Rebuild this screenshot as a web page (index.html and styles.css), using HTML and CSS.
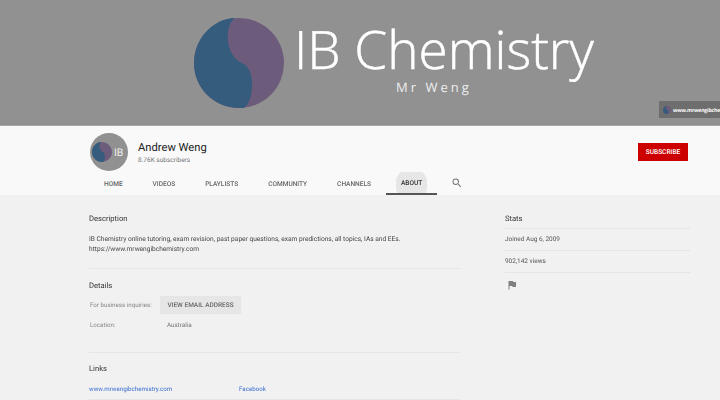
FILE: index.html
```html
<!DOCTYPE html>
<html lang="en">
<head>
<meta charset="utf-8">
<title>Andrew Weng - About</title>
<link rel="stylesheet" href="styles.css">
</head>
<body>
<svg class="defs" width="0" height="0" aria-hidden="true">
  <symbol id="yin" viewBox="0 0 90 90">
    <circle cx="45" cy="45" r="45" fill="#6c5b7b"/>
    <path d="M41 0C35 4 33 14 34 24C36 36 42 43 50 46C56 50 58 58 58 65C58 76 56 85 50 90C48 90 46 90 45 90C20 90 0 70 0 45C0 20 20 0 41 0Z" fill="#355c7d"/>
  </symbol>
</svg>
<div class="page">
<header class="banner">
  <svg class="banner-logo"><use href="#yin"/></svg>
  <div class="banner-text">
    <div class="banner-title">IB Chemistry</div>
    <div class="banner-sub">Mr Weng</div>
  </div>
  <div class="banner-chip">
    <svg class="chip-logo"><use href="#yin"/></svg>
    <span class="chip-text">www.mrwengibche</span>
  </div>
</header>
<section class="channel">
  <div class="channel-row">
    <div class="avatar">
      <svg class="avatar-logo"><use href="#yin"/></svg>
      <span class="avatar-text">IB</span>
    </div>
    <div class="channel-meta">
      <div class="channel-name">Andrew Weng</div>
      <div class="channel-subs">8.76K subscribers</div>
    </div>
    <div class="subscribe">SUBSCRIBE</div>
  </div>
  <nav class="tabs">
    <span class="tab">HOME</span>
    <span class="tab">VIDEOS</span>
    <span class="tab">PLAYLISTS</span>
    <span class="tab">COMMUNITY</span>
    <span class="tab">CHANNELS</span>
    <span class="tab tab-active"><span class="tab-label">ABOUT</span></span>
    <svg class="search" viewBox="0 0 24 24"><path d="M15.5 14h-.79l-.28-.27A6.47 6.47 0 0 0 16 9.5 6.5 6.5 0 1 0 9.5 16c1.61 0 3.09-.59 4.23-1.57l.27.28v.79l5 4.99L20.49 19l-4.99-5zm-6 0C7.01 14 5 11.99 5 9.5S7.01 5 9.5 5 14 7.01 14 9.5 11.99 14 9.5 14z"/></svg>
  </nav>
</section>
<main class="about">
  <div class="left">
    <h2 class="heading heading-desc">Description</h2>
    <p class="desc">IB Chemistry online tutoring, exam revision, past paper questions, exam predictions, all topics, IAs and EEs.<br>https://www.mrwengibchemistry.com</p>
    <hr class="rule rule-a">
    <h2 class="heading heading-details">Details</h2>
    <div class="detail-row">
      <span class="detail-label">For business inquiries:</span>
      <span class="email-btn">VIEW EMAIL ADDRESS</span>
    </div>
    <div class="detail-row detail-loc">
      <span class="detail-label">Location:</span>
      <span class="detail-value">Australia</span>
    </div>
    <hr class="rule rule-b">
    <h2 class="heading heading-links">Links</h2>
    <div class="links">
      <a class="link link-site">www.mrwengibchemistry.com</a>
      <a class="link">Facebook</a>
    </div>
    <hr class="rule rule-c">
  </div>
  <aside class="right">
    <h2 class="heading heading-stats">Stats</h2>
    <div class="stat">Joined Aug 6, 2009</div>
    <div class="stat">902,142 views</div>
    <div class="stat stat-flag">
      <svg class="flag" viewBox="0 0 24 24"><path d="M14.4 6 14 4H5v17h2v-7h5.6l.4 2h7V6z"/></svg>
    </div>
  </aside>
</main>
</div>
</body>
</html>
```
FILE: styles.css
```css
* { box-sizing: border-box; }
html, body { margin: 0; padding: 0; }
body {
  width: 720px;
  height: 400px;
  overflow: hidden;
  background: #f1f1f1;
  font-family: Roboto, "Liberation Sans", sans-serif;
  color: #333;
  text-rendering: geometricPrecision;
}
.defs { position: absolute; }
.page { filter: blur(0.3px); }

.banner {
  position: relative;
  height: 126px;
  background: #919191;
  border-bottom: 1px solid #a8a8a8;
  display: flex;
  padding: 18px 0 0 194px;
  overflow: hidden;
}
.banner-logo { width: 90px; height: 90px; flex: none; }
.banner-text {
  margin-left: 10px;
  display: flex;
  flex-direction: column;
  color: #fff;
}
.banner-title {
  font-family: "Open Sans", sans-serif;
  font-weight: 300;
  font-size: 53px;
  line-height: 60px;
  margin-top: 1px;
  white-space: nowrap;
  -webkit-text-stroke: 0.5px #fff;
}
.banner-sub {
  font-family: "Open Sans", sans-serif;
  font-size: 13px;
  line-height: 16px;
  letter-spacing: 3px;
  text-align: center;
  padding-right: 20px;
  color: #eee;
}
.banner-chip {
  position: absolute;
  left: 659px;
  top: 101px;
  width: 61px;
  height: 17px;
  background: #6e6e6e;
  display: flex;
  align-items: center;
  padding-left: 4px;
  gap: 2px;
  overflow: hidden;
}
.chip-logo { width: 8px; height: 8px; flex: none; }
.chip-text {
  font-family: "Open Sans", sans-serif;
  font-size: 5.2px;
  font-weight: 700;
  letter-spacing: -0.2px;
  color: #fff;
  white-space: nowrap;
}

.channel {
  height: 69px;
  background: #f9f9f9;
  padding: 7px 32px 0 89px;
  display: flex;
  flex-direction: column;
}
.channel-row {
  display: flex;
  align-items: center;
  height: 38px;
  padding-left: 1px;
}
.avatar {
  width: 38px;
  height: 38px;
  border-radius: 50%;
  background: #919191;
  display: flex;
  align-items: center;
  padding-left: 2px;
  gap: 2px;
  flex: none;
}
.avatar-logo { width: 20px; height: 20px; flex: none; }
.avatar-text { font-size: 10.5px; color: #f0f0f0; }
.channel-meta { margin-left: 10px; flex: 1; padding-top: 1px; }
.channel-name { font-size: 11.2px; line-height: 15px; color: #222; }
.channel-subs { font-size: 6.5px; line-height: 9px; color: #777; margin-top: 1px; }
.subscribe {
  width: 50px;
  height: 18px;
  background: #cc0000;
  color: #fff;
  font-size: 6.6px;
  font-weight: 500;
  display: flex;
  align-items: center;
  justify-content: center;
}
.tabs {
  display: flex;
  align-items: stretch;
  height: 23px;
  margin-top: 1px;
}
.tab {
  padding: 0 15px;
  font-size: 6.55px;
  font-weight: 500;
  color: #666;
  display: flex;
  align-items: center;
  position: relative;
}
.tab-active {
  border-bottom: 2px solid #555;
  color: #333;
  overflow: hidden;
}
.tab-label { position: relative; isolation: isolate; }
.tab-label::before {
  content: "";
  position: absolute;
  left: -5px;
  right: -5px;
  top: -10px;
  height: 31px;
  border-radius: 50% / 40%;
  background: #e6e6e6;
  z-index: -1;
}
.search { width: 12px; height: 12px; fill: #777; margin: 5px 0 0 14px; }

.about {
  display: flex;
  padding: 0 0 0 89px;
}
.left { width: 371px; flex: none; }
.right { width: 185px; flex: none; margin-left: 45px; }
.heading {
  margin: 0;
  font-size: 7.6px;
  font-weight: 400;
  line-height: 12px;
  color: #333;
}
.heading-desc { margin-top: 18px; }
.desc {
  margin: 9px 0 0;
  font-size: 6.6px;
  line-height: 10px;
  color: #444;
}
.rule { border: 0; border-top: 1px solid #e5e5e5; margin: 0; }
.rule-a { margin-top: 14px; }
.heading-details { margin-top: 11px; }
.detail-row { display: flex; align-items: center; }
.detail-row:not(.detail-loc) { margin-top: 4px; }
.detail-loc { margin-top: 6px; height: 10px; }
.detail-label { width: 71px; padding-left: 1px; font-size: 6.2px; color: #888; }
.email-btn {
  width: 81px;
  height: 18px;
  background: #e6e6e6;
  color: #666;
  font-size: 6.5px;
  font-weight: 500;
  display: flex;
  align-items: center;
  justify-content: center;
}
.detail-value { padding-left: 7px; font-size: 6.3px; color: #777; }
.rule-b { margin-top: 22px; }
.heading-links { margin-top: 10px; }
.links { display: flex; margin-top: 9px; line-height: 10px; }
.link { font-size: 6.2px; color: #3a6fd0; }
.link-site { width: 150px; }
.rule-c { margin-top: 5px; }
.heading-stats { margin-top: 18px; padding-bottom: 3px; }
.stat {
  border-top: 1px solid #e5e5e5;
  height: 22px;
  font-size: 6.45px;
  line-height: 21px;
  color: #555;
}
.stat-flag { height: 28px; padding: 6px 0 0 1px; }
.flag { width: 12px; height: 12px; fill: #808080; display: block; }
```
